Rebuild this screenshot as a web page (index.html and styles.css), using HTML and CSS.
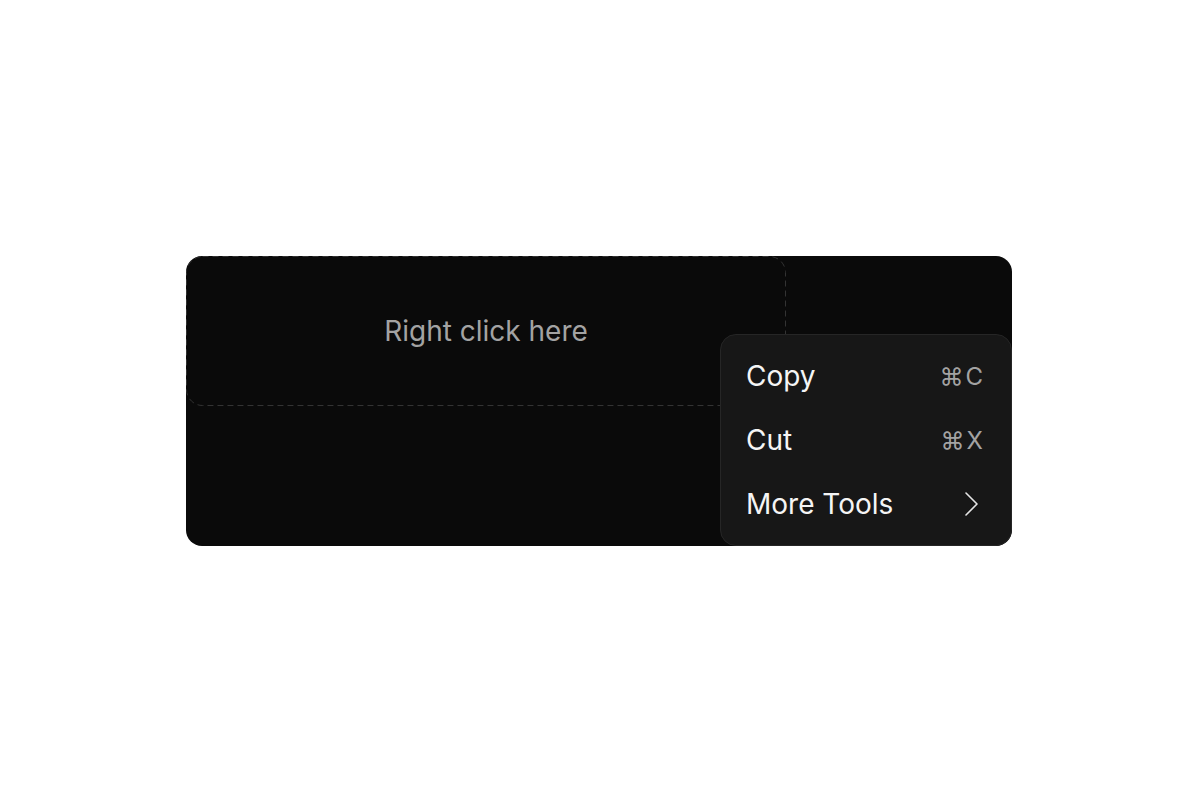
FILE: index.html
```html
<!DOCTYPE html>
<html>
<head>
<meta charset="utf-8">
<link rel="stylesheet" href="styles.css">
</head>
<body>
<div class="stage">
  <div class="area">
    <div class="trigger">Right click here</div>
  </div>
  <div class="menu">
    <div class="item"><span class="label">Copy</span><span class="kbd">⌘C</span></div>
    <div class="item"><span class="label">Cut</span><span class="kbd">⌘X</span></div>
    <div class="item"><span class="label">More Tools</span>
      <svg class="chev" width="16" height="26" viewBox="0 0 16 26"><polyline points="3,2 14,13 3,24" fill="none" stroke="#e5e5e5" stroke-width="1.6" stroke-linecap="round" stroke-linejoin="round"/></svg>
    </div>
  </div>
</div>
</body>
</html>
```
FILE: styles.css
```css
html, body {
  margin: 0;
  height: 100%;
  background: #ffffff;
  font-family: Inter, "Noto Sans", sans-serif;
}
body {
  display: flex;
  align-items: center;
  justify-content: center;
}
.stage {
  position: relative;
  width: 826px;
  height: 290px;
  background: #0a0a0a;
  border-radius: 16px;
  overflow: hidden;
  margin: 2px 2px 0 0;
}
.area {
  display: flex;
}
.trigger {
  position: relative;
  width: 600px;
  height: 150px;
  box-sizing: border-box;
  border-radius: 16px;
  display: flex;
  align-items: center;
  justify-content: center;
  color: #a3a3a3;
  font-size: 28px;
}
.trigger::before {
  content: "";
  position: absolute;
  inset: 0;
  background-image: url("data:image/svg+xml,%3Csvg xmlns='http://www.w3.org/2000/svg' width='600' height='150'%3E%3Crect x='0.5' y='0.5' width='599' height='149' rx='16' ry='16' fill='none' stroke='%23333333' stroke-width='1' stroke-dasharray='6 4'/%3E%3C/svg%3E");
}
.menu {
  position: absolute;
  right: 0;
  bottom: 0;
  width: 292px;
  box-sizing: border-box;
  padding: 9px 0;
  background: #171717;
  border: 1px solid #262626;
  border-radius: 16px;
  display: flex;
  flex-direction: column;
}
.item {
  height: 64px;
  display: flex;
  align-items: center;
  justify-content: space-between;
  padding: 0 26px 0 25px;
  color: #f5f5f5;
  font-size: 28px;
}
.kbd {
  color: #a3a3a3;
  font-size: 24px;
  letter-spacing: 2px;
}
.chev {
  margin-right: 6px;
}
```
